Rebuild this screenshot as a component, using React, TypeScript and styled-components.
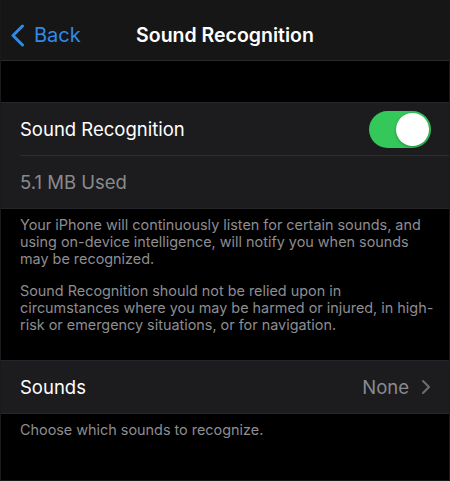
import styled, { createGlobalStyle } from "styled-components";

const Global = createGlobalStyle`
  html, body {
    margin: 0;
    padding: 0;
    background: #000;
  }
  body {
    font-family: Inter, "Noto Sans", "Liberation Sans", sans-serif;
    -webkit-font-smoothing: antialiased;
  }
`;

const App = () => {
  return (
    <Screen>
      <Global />
      <NavBar>
        <BackButton>
          <svg width="15" height="23" viewBox="0 0 15 23">
            <path
              d="M12.5 2 L3 11.5 L12.5 21"
              fill="none"
              stroke="#2f8ae8"
              strokeWidth="3"
              strokeLinecap="round"
              strokeLinejoin="round"
            />
          </svg>
          <span>Back</span>
        </BackButton>
        <Title>Sound Recognition</Title>
      </NavBar>

      <Group $top={41}>
        <Row $divider>
          <Label>Sound Recognition</Label>
          <Toggle>
            <Knob />
          </Toggle>
        </Row>
        <Row>
          <Label $muted>5.1 MB Used</Label>
        </Row>
      </Group>

      <Footer>
        <p>
          Your iPhone will continuously listen for certain sounds, and
          <br />
          using on-device intelligence, will notify you when sounds
          <br />
          may be recognized.
        </p>
        <p>
          Sound Recognition should not be relied upon in
          <br />
          circumstances where you may be harmed or injured, in high-
          <br />
          risk or emergency situations, or for navigation.
        </p>
      </Footer>

      <Group $top={27}>
        <Row>
          <Label>Sounds</Label>
          <Detail>
            <span>None</span>
            <svg width="10" height="16" viewBox="0 0 10 16">
              <path
                d="M2 2 L8 8 L2 14"
                fill="none"
                stroke="#6d6d72"
                strokeWidth="2"
                strokeLinecap="round"
                strokeLinejoin="round"
              />
            </svg>
          </Detail>
        </Row>
      </Group>

      <Footer>
        <p>Choose which sounds to recognize.</p>
      </Footer>
    </Screen>
  );
};

export default App;

const Screen = styled.div`
  width: 450px;
  height: 481px;
  box-sizing: border-box;
  background: #000;
  border: 1px solid #1a1a1a;
  border-top: none;
  overflow: hidden;
  display: flex;
  flex-direction: column;
`;

const NavBar = styled.div`
  height: 61px;
  flex-shrink: 0;
  background: #161616;
  border-bottom: 1px solid #2a2a2a;
  display: flex;
  align-items: center;
  justify-content: center;
  padding-top: 9px;
  box-sizing: border-box;
  position: relative;
`;

const BackButton = styled.div`
  position: absolute;
  left: 9px;
  top: 9px;
  bottom: 0;
  display: flex;
  align-items: center;
  gap: 9px;
  color: #2f8ae8;
  font-size: 20px;
  padding-top: 1px;
`;

const Title = styled.div`
  color: #fff;
  font-size: 19.5px;
  font-weight: 600;
`;

const Group = styled.div<{ $top: number }>`
  margin-top: ${(p) => p.$top}px;
  background: #1c1c1e;
  border-top: 1px solid #262628;
  border-bottom: 1px solid #262628;
  padding-left: 19px;
`;

const Row = styled.div<{ $divider?: boolean }>`
  height: 52px;
  display: flex;
  align-items: center;
  justify-content: space-between;
  padding-right: 18px;
  border-bottom: ${(p) => (p.$divider ? "1px solid #2e2e30" : "none")};
`;

const Label = styled.div<{ $muted?: boolean }>`
  font-size: 18.5px;
  color: ${(p) => (p.$muted ? "#8a8a8e" : "#fff")};
`;

const Toggle = styled.div`
  width: 62px;
  height: 37px;
  border-radius: 19px;
  background: #34c759;
  display: flex;
  align-items: center;
  justify-content: flex-end;
  padding: 0 2px;
  box-sizing: border-box;
`;

const Knob = styled.div`
  width: 33px;
  height: 33px;
  border-radius: 50%;
  background: #fff;
  box-shadow: 0 1px 3px rgba(0, 0, 0, 0.3);
`;

const Detail = styled.div`
  display: flex;
  align-items: center;
  gap: 12px;
  color: #8a8a8e;
  font-size: 18.5px;
`;

const Footer = styled.div`
  padding: 7px 0 0 19px;
  color: #8d8d92;
  font-size: 14.4px;
  line-height: 17px;
  white-space: nowrap;

  p {
    margin: 0 0 15px;
  }
  p:last-child {
    margin-bottom: 0;
  }
`;
